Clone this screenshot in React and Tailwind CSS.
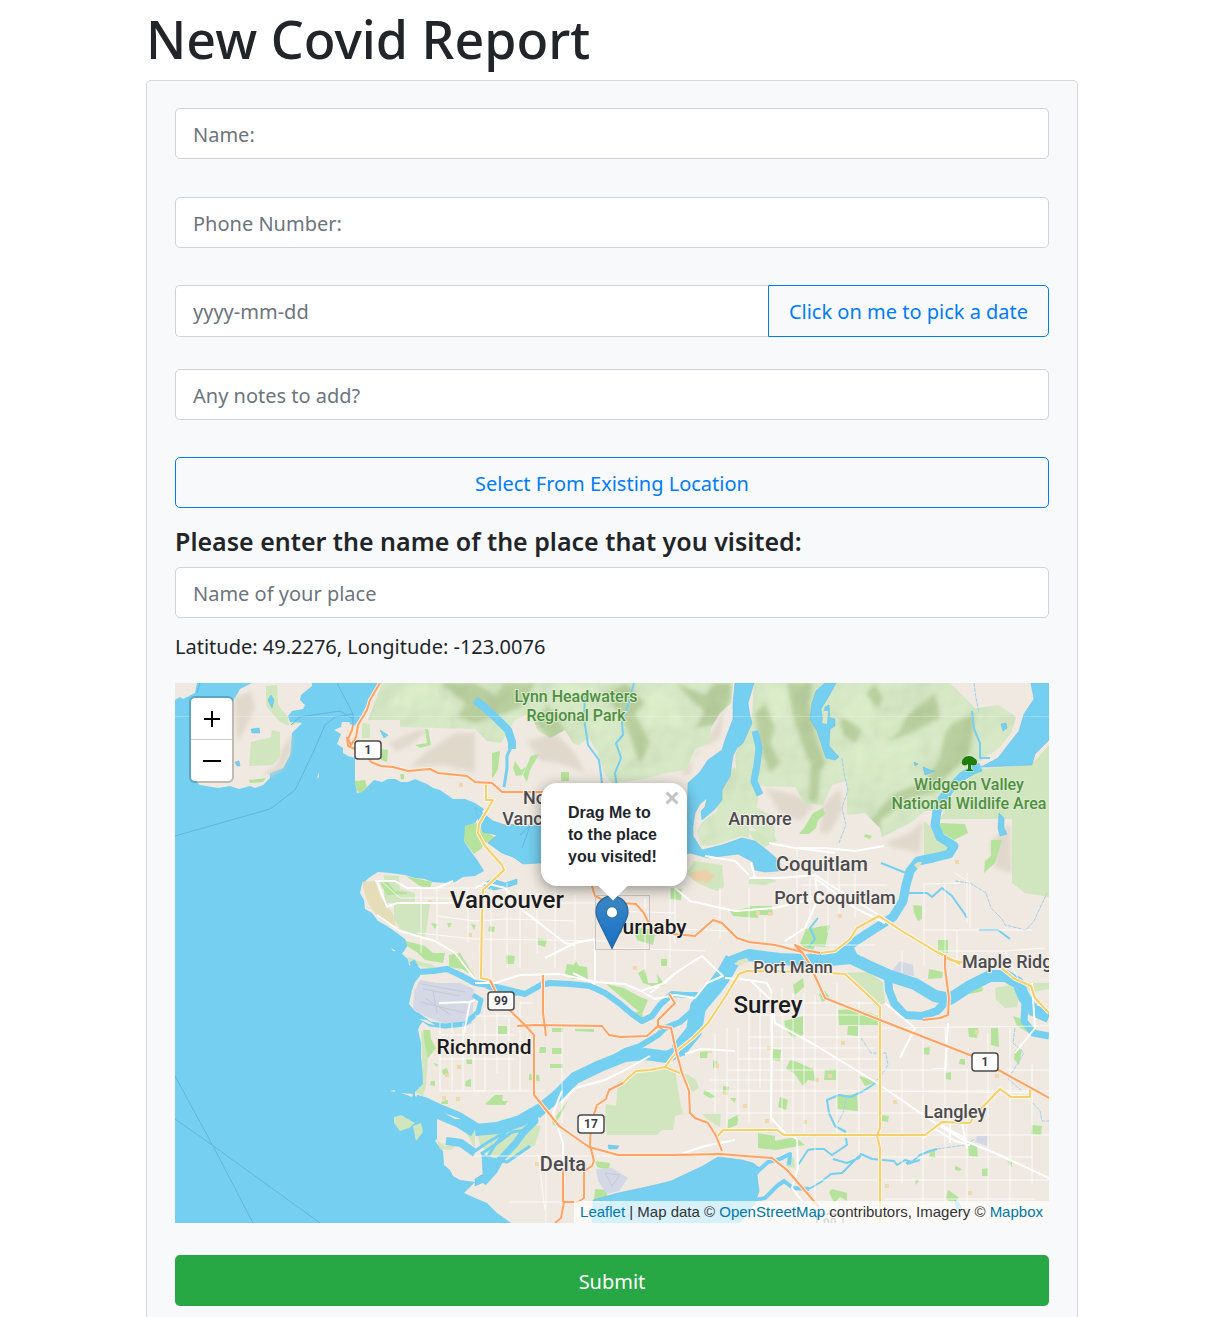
import React from "react";

const field =
  "block w-full h-[51px] rounded-[5px] border border-[#ced4da] bg-white px-[17px] pt-0.5 text-xl text-[#495057] placeholder:text-[#6c757d] placeholder:opacity-100 outline-none focus:border-[#80bdff]";

const outlineButton =
  "border border-[#007bff] text-[#007bff] text-xl hover:bg-[#007bff] hover:text-white";

/* Terrain shapes, drawn on an 874 x 540 canvas */
const MAINLAND =
  "M207 0L193 20L184 37L178 45L174 39L167 39L166 44L159 47L166 51L162 61L168 65L168 70L173 73L180 75L180 97L182 110L188 108L193 103L199 97L207 99L213 96L220 96L226 99L233 99L240 96L247 99L252 101L258 105L265 107L278 116L290 116L300 120L309 126L304 134L300 140L292 143L289 158L297 170L303 178L309 188L300 193L288 194L280 199L272 200L257 199L250 196L240 195L230 192L215 190L203 189L195 194L187 201L185 210L189 217L190 226L197 230L203 238L212 243L222 250L230 256L233 262L227 271L233 276L234 282L245 285L245 293L240 299L237 307L234 321L239 327L250 336L245 342L243 347L246 360L246 374L248 390L248 405L240 409L240 413L252 419L262 424L262 456L260 458L268 468L269 482L275 487L278 493L285 497L300 499L289 510L300 515L312 520L322 530L336 540L874 540L874 0Z";

const WATER_BODIES = [
  "M300 124L309 131L318 138L330 142L345 141L370 143L400 143L440 140L475 138L513 132L518 133L518 153L527 167L547 162L567 155L580 158L588 164L600 174L606 181L604 188L590 189L580 187L578 179L563 171L533 175L515 170L490 176L440 184L400 183L365 180L348 181L338 174L327 170L313 160L322 152L308 149L303 135Z",
  "M560 0L558 20L558 36L550 57L547 67L533 77L525 89L513 100L512 134L518 142L520 130L525 121L532 115L530 124L526 128L527 137L540 126L547 117L547 107L555 93L558 73L562 65L568 60L577 40L575 33L573 20L579 0Z",
  "M650 0L641 8L637 20L635 36L642 48L646 60L651 75L660 77L664 74L654 63L655 46L660 43L660 36L655 35L654 22L650 24L648 39L646 26L654 13L661 0Z",
  "M856 0L859 16L849 31L844 48L833 62L823 75L806 84L812 84L857 82L860 71L874 57L874 0Z",
  "M417 540L418 517L443 510L462 506L480 502L496 498L513 490L528 483L543 474L567 477L578 480L586 486L582 492L584 508L580 520L565 540Z",
  "M307 470L320 478L318 490L309 499L300 503L300 496L308 491Z",
  "M309 200L318 196L330 200L342 196L342 201L330 205L318 207L309 204Z",
  "M824 130L829 135L829 145L832 151L825 153L823 145Z",
  "M93 17L96 12L99 17L97 25ZM76 46L84 45L85 50L77 50ZM205 47L213 52L209 55ZM60 79L64 78L65 83L62 83ZM748 84L755 87L760 88L750 92ZM739 79L743 81L740 83ZM826 41L831 40L832 45L828 48Z",
  "M433 462L444 463L442 466L434 466ZM780 517L784 520L788 529L781 525Z",
];

const RIVERS = [
  ["M300 17L309 24L320 34L333 47L337 59L337 66", 8],
  ["M337 62L332 73L332 85L329 104", 3],
  ["M410 12L409 35L413 62L424 77L427 100L437 106", 2],
  ["M459 0L453 22L447 40L448 52L441 60L446 75L440 90L442 104", 2],
  ["M580 48L584 65L582 82L579 98L585 112", 7],
  ["M806 84L798 87L788 93L777 104L768 115L762 128L760 142L765 154L779 163L774 171L758 175L743 178L735 188L731 202L728 218L718 234L704 243L690 252L675 262L658 273", 9],
  ["M874 334L858 327L849 314L843 300L831 293L815 293L795 303L775 316L760 313L740 301L715 293L695 284L676 275L655 277L630 277L605 276L574 272L558 278L550 293L538 308L523 328L518 350L504 368L492 374L470 371L450 373L425 383L400 395L382 413L366 426L345 438L322 445L300 447", 12],
  ["M558 276L550 290L540 304L523 324L519 348L503 368", 16],
  ["M300 447L284 437L265 429L250 422L240 419", 15],
  ["M713 292L714 307L719 320L730 332L747 333L762 328L772 317", 8],
  ["M847 305L850 320L849 338L858 350L874 353", 7],
  ["M672 262L679 276M655 275L670 265L679 278", 10],
  ["M530 312L510 312L497 311L485 322L477 333L467 338L457 331L444 320L430 310L415 303L395 301L375 300L366 302L350 311L330 306L313 302L300 300L285 292L272 286L258 288L243 289L237 278", 6],
  ["M533 318L520 326L505 339L490 345L483 352L465 363L450 368L440 374", 6],
  ["M298 312L306 317L303 329L290 341L270 343L255 341L241 331", 5],
  ["M311 304L335 312L350 310", 3],
  ["M357 425L360 438L348 450L340 461L325 477L319 488L308 500", 7],
  ["M357 435L330 449L310 461L300 468M352 447L337 449L321 461L306 471M333 446L320 462L312 475L332 479L355 463M384 412L374 425L364 434", 3],
  ["M300 470L286 460L271 458", 8],
  ["M574 500L582 489L593 479L605 476L615 471L614 482M574 518L590 515L602 503L609 498L618 505L634 506", 4],
  ["M623 482L633 467L639 466L649 466L657 472L672 462L671 455M658 476L672 480L684 475L686 471L697 476L719 478L722 482L730 477L737 479L745 472L755 468L762 466M634 506L646 499L656 491L667 490L675 482L684 473", 2],
  ["M671 449L660 443L654 430L652 417L664 412L676 414L690 407L702 399", 2],
  ["M706 180L716 184L731 190M731 480L734 480M732 481L745 477M731 210L752 210L757 214L767 205L777 213L789 230L792 235M804 247L823 247L835 256", 2],
  ["M797 28L799 46L805 60L805 75L815 75", 2],
  ["M643 235L635 245L640 256L634 264", 2],
];

const FINE_STREAMS =
  "M667 75L669 90L673 107L667 125L671 142L664 160M799 0L801 15L804 30M780 198L795 200L811 210L816 225L827 236L830 242L851 247L859 238L872 210M686 355L696 370L711 370L713 382L706 393L700 399M840 345L838 360L849 370L840 385L833 396L846 407M858 420L865 428L867 438L874 438M672 413L668 430L660 445M762 466L790 462L800 456";

const PARKS = [
  "M207 0L193 37L225 37L225 44L300 46L312 58L326 60L340 37L355 30L363 48L375 55L390 47L398 60L404 62L413 55L422 68L430 92L437 100L470 96L490 90L511 87L520 66L535 60L536 45L545 30L556 20L558 0Z",
  "M579 0L577 33L567 55L560 73L562 95L574 112L574 142L597 160L600 148L598 133L582 125L584 103L620 104L630 121L648 122L657 102L672 98L672 132L690 130L705 145L707 154L735 140L750 128L762 128L775 104L790 90L806 77L824 65L836 50L841 34L824 22L800 25L775 0Z",
  "M545 93L560 84L574 112L574 155L566 153L540 162L526 163L522 148L528 138L542 128Z",
  "M804 86L856 82L874 62L874 214L850 210L837 200L837 136L765 136L780 108Z",
  "M749 138L768 154L778 163L772 171L749 174Z",
  "M209 192L224 193L225 206L240 210L240 221L255 221L253 235L250 255L225 246L219 236L219 220L209 220Z",
  "M441 423L443 399L455 393L465 387L500 386L502 400L506 423L508 431L500 433L498 447L487 447L482 452L432 452L430 434L431 421Z",
  "M508 389L521 397L524 405L517 409ZM527 431L546 431L545 444L533 437Z",
  "M671 290L695 289L708 300L710 320L700 323Z",
  "M519 178L547 182L549 204L542 208L524 201L511 191Z",
  "M302 450L325 449L345 441L366 443L360 462L340 474L319 477L305 462Z",
  "M219 434L226 432L240 440L234 445L225 448L219 440ZM238 443L246 440L248 449L241 458ZM262 457L270 463L280 463L277 467L265 466ZM290 448L300 448L300 465Z",
  "M233 274L243 278L258 282L262 287L246 283L235 282ZM246 348L250 352L253 373L251 402L248 413L240 409L248 401Z",
  "M820 305L835 302L845 312L842 324L830 325L821 317Z",
  "M91 3L102 2L103 22L113 34L114 43L105 39L91 23ZM76 59L96 54L97 47L105 49L105 75L97 82L74 83ZM187 40L195 41L195 55L187 55ZM115 39L127 40L116 42Z",
  "M611 479L619 474L620 485L612 484ZM845 300L874 300L874 306L858 309Z",
  "M574 148L598 148L602 158L590 164L578 156ZM574 195L590 194L602 198L590 202L574 201Z",
];

const MEADOWS = [
  "M180 98L190 97L192 105L185 110L181 107ZM206 66L213 67L212 79L206 77ZM74 97L91 95L88 99L75 100ZM225 91L229 91L229 96L226 97Z",
  "M250 46L253 46L256 62L245 65L240 62L252 60Z",
  "M290 143L301 140L311 149L323 156L315 160L308 159L307 165L299 171L289 158Z",
  "M205 197L213 199L220 208L232 209L232 211L212 212L206 202ZM231 193L257 199L255 205L245 203ZM231 258L250 263L258 270L270 270L268 280L250 277L243 270L232 263Z",
  "M274 272L285 270L300 294L287 286L274 284ZM248 347L255 347L256 356L261 365L253 375L250 363Z",
  "M392 281L399 282L400 277L404 283L412 284L413 296L398 296L390 291ZM431 301L449 305L463 313L473 317L467 331L451 318ZM455 330L466 328L468 334L462 335Z",
  "M377 439L388 424L393 418L385 433L379 443ZM310 421L320 412L328 412L327 418L333 418L330 422L313 422Z",
  "M340 78L346 87L351 84L347 92L341 93L338 85ZM356 73L364 71L355 87L352 99L348 92ZM317 70L325 68L323 86L317 96ZM386 89L394 89L394 98L386 98Z",
  "M629 145L638 130L648 125L650 131L643 137L641 145L634 151L624 151ZM690 151L697 153L695 156L689 154ZM764 140L790 141L793 150L779 157L768 150ZM816 157L827 157L820 180L809 190L810 178L816 173ZM738 222L747 223L747 236L743 238L739 230Z",
  "M574 223L597 223L598 232L580 232ZM631 246L655 242L650 264L640 263L636 272L625 261ZM763 257L773 257L773 270L763 270ZM495 205L507 206L506 217L495 216ZM555 228L582 223L583 235L558 233Z",
  "M663 327L680 326L705 333L703 342L664 342ZM673 343L683 343L683 353L672 352ZM609 338L628 333L628 352L618 355L611 347ZM597 366L606 367L605 378L597 377ZM615 377L622 379L638 386L641 398L633 397L628 403L619 390L611 386Z",
  "M662 413L682 411L683 428L662 426ZM684 393L702 399L690 403ZM650 387L661 386L661 397L649 397ZM605 414L613 417L611 427L603 424ZM583 461L620 454L630 462L601 467L583 465ZM706 432L714 433L713 439L707 438Z",
  "M816 345L823 345L824 364L816 362ZM793 345L803 345L802 355L794 354ZM840 367L847 366L844 382L839 376ZM771 390L776 389L776 397L771 396ZM749 365L755 364L754 372L749 371ZM785 376L790 376L790 382L784 381ZM857 442L867 443L866 452L856 451Z",
  "M793 459L802 464L803 474L794 473ZM807 486L813 485L813 493L807 493ZM780 483L787 486L785 488L780 487ZM773 507L779 511L784 515L777 520L771 516ZM755 467L760 467L760 475L754 474ZM832 478L837 479L837 484Z",
  "M657 506L665 508L672 510L672 518L665 514L659 520L654 509ZM741 496L744 498L740 502ZM420 506L432 507L432 517L419 518ZM420 478L435 480L434 487L422 484Z",
  "M365 364L371 364L371 370L364 370ZM377 365L387 365L387 371L377 371ZM375 381L388 381L388 385L375 385ZM323 343L332 343L332 351L323 351ZM377 345L388 345L388 349L377 349ZM354 391L364 392L365 398L354 397ZM400 346L419 346L419 349L400 348Z",
  "M258 380L263 381L262 384ZM267 387L272 385L274 391L268 392ZM256 398L260 398L260 403L255 402ZM291 376L297 376L297 381L292 381ZM291 398L296 396L296 404L290 403ZM267 418L273 417L273 421L266 421Z",
  "M463 290L470 286L473 300L483 300L482 291L490 302L480 304L468 300ZM331 272L340 273L339 281L331 281ZM486 276L492 276L492 283L486 283ZM525 369L533 368L532 375L525 375ZM538 377L543 379L538 386ZM548 403L554 404L553 411L548 411ZM555 415L561 415L560 420ZM530 407L541 414L535 415L528 411Z",
  "M553 437L564 431L562 442L552 446ZM583 450L600 453L600 460L583 462ZM256 240L263 241L260 246ZM272 240L277 240L274 245ZM296 241L301 242L299 247ZM314 243L320 244L319 249L313 248ZM362 255L372 257L370 264L363 262ZM459 248L471 243L480 252L478 262L462 257Z",
  "M618 302L628 295L629 304L620 312ZM644 311L650 308L655 315L647 319ZM754 286L768 289L767 295L753 296ZM793 303L806 299L808 308L795 311ZM838 333L850 337L862 346L854 350L842 343Z",
];

const RELIEF_DARK = [
  "M265 0L290 20L283 35L300 40L345 25L360 0L330 0L320 12L300 0Z",
  "M430 10L450 40L465 80L475 60L460 30L470 20L450 0Z",
  "M500 0L530 30L520 45L545 40L556 15L556 0L540 0L530 12Z",
  "M612 0L637 0L635 20L640 50L650 80L643 90L632 75L620 40Z",
  "M706 55L735 30L760 10L765 35L740 48L715 58Z",
  "M778 40L800 30L795 70L770 95L760 110L735 115L705 138L706 152L690 142L720 110L750 98L765 75L770 50Z",
  "M636 75L646 85L642 120L634 118Z",
  "M590 20L600 45L595 60L605 80L595 90L584 60L580 30Z",
  "M360 40L372 22L380 30L392 52L376 58Z",
  "M700 0L708 15L700 30L690 12ZM665 35L690 42L680 60L668 52Z",
];

const RELIEF_LIGHT = [
  "M230 0L262 5L280 28L258 22L240 30L215 20Z",
  "M380 0L420 5L435 30L425 55L400 30Z",
  "M475 0L500 20L510 50L490 40L482 70L472 40Z",
  "M590 0L610 5L612 30L600 38Z",
  "M662 28L690 10L715 40L735 22L725 48L700 70L690 50Z",
  "M680 60L720 65L745 55L735 85L700 110L680 90Z",
  "M810 90L850 95L845 120L820 120Z",
];

const HILLS = [
  "M60 15L76 8L80 25L68 50L62 60L60 30Z",
  "M96 93L108 85L116 68L117 50L108 65L102 82L88 92Z",
  "M214 60L240 48L255 46L235 62L222 68Z",
  "M250 70L280 50L300 50L300 90L270 82L235 84Z",
  "M352 58L380 50L400 70L410 90L385 80L365 78Z",
  "M590 105L620 112L640 122L625 138L605 130Z",
  "M648 122L665 105L668 125L655 150L645 150Z",
  "M690 150L710 160L735 150L748 138L745 170L720 165Z",
  "M815 160L835 140L837 190L820 185Z",
  "M520 70L545 55L550 20L542 40L530 62L505 92L515 92Z",
];

const STREETS_MINOR =
  "M246 205L246 270M262 205L262 257M293 205L293 260M316 205L316 300M332 200L332 285M345 206L345 285M362 210L362 270M380 205L380 285M400 212L400 280M440 215L440 300M470 215L470 290M495 205L495 285M206 198L225 215L262 215L300 216M232 205L300 205M262 233L300 238L330 236L400 238M242 250L300 256L440 258M300 220L420 220M440 228L500 230M470 245L560 248M500 205L500 260M545 205L545 255M440 265L530 268M265 340L265 408L310 408M277 340L277 408M288 340L288 408M299 340L299 408M265 352L340 352M265 376L340 376M310 325L310 408M322 330L322 390M334 335L334 408M345 318L345 408M300 333L345 333M300 366L345 366M345 320L358 320M387 340L387 440M300 408L370 408M265 363L300 363M371 430L371 540M363 470L370 527M335 519L430 519M300 473L500 473";

const STREETS_EAST =
  "M585 305L585 405M596 305L596 440M607 305L607 445M618 310L618 450M629 310L629 450M640 312L640 530M662 300L662 455M684 318L684 470M552 345L552 445M563 345L563 435M574 320L574 440M540 350L540 430M596 320L705 320M585 332L705 332M574 354L705 354M574 365L700 365M563 376L705 376M552 387L874 387M535 397L620 397M530 408L874 408M552 430L705 430M727 387L727 500M748 345L748 540M770 387L770 520M792 385L792 540M813 350L813 540M835 345L835 535M857 380L857 500M704 345L874 343M704 408L870 410M704 430L790 430M704 452L874 452M704 474L857 474M640 497L874 497M710 516L860 516M749 200L749 283M770 200L770 280M792 190L792 240M749 247L857 247M782 247L782 285M749 201L785 200M574 205L574 250M590 235L590 262M622 165L622 265M635 195L635 240M653 165L653 250M664 180L664 230M680 190L680 235M604 262L700 262M626 202L712 202M600 212L660 215M760 268L830 268L870 265M727 268L727 290M770 345L772 385L757 386M830 268L845 300M795 245L795 200L780 190";

const STREETS_MAJOR =
  "M420 256L420 298M300 300L320 300L345 292L385 291L420 299L450 301L466 308L480 316L500 312L520 315L532 300L548 293L527 273L505 287L475 310M466 308L490 300L500 290M500 205L515 218L560 228L600 225L640 215M398 290L420 301M370 275L400 260L420 256M387 408L378 430L388 460L388 520M386 420L400 405L430 397L450 387L475 373M510 371L525 366L560 368M550 295L575 297L597 318L600 340L640 362L702 400L760 440L790 458L820 470L874 495M640 195L680 225L710 240M574 195L605 195L640 192L660 205L707 234M594 160L620 165L650 165L680 168L709 163M622 165L660 170M530 173L560 178L574 192M640 194L643 216L630 245L610 258M576 180L580 195M710 320L740 345L725 375M597 318L597 360L596 435L610 450L622 456L623 485L617 505L640 535M773 340L770 388M857 300L860 345L840 370M500 473L530 463L560 457M560 295L592 300L597 310M264 320L295 319L300 317M295 319L289 350M300 205L310 200L330 205L345 225L390 260L400 262M278 198L262 205L232 205L220 198L200 198M202 198L212 224L222 220L300 220M202 232L225 248L260 258L280 270L300 296M748 455L760 446L780 458L795 462M762 440L790 455M775 436L775 460M787 440L792 465";

const HIGHWAYS_YELLOW = [
  "M311 101L311 117L318 117L304 141L303 150L310 163L327 182L329 187L308 207L307 230L306 295L315 297",
  "M705 540L705 465L702 452L705 445L705 324L696 315L670 291L640 289L572 288L564 291L552 311L533 340L518 355L503 367L490 384L475 387L461 388L453 395L448 400",
  "M646 270L660 268L675 256L682 245L704 233L727 248L760 268L785 281",
  "M541 455L548 447L602 447L609 452L750 452L767 439L795 440L800 432L825 406L836 414L855 414L855 402",
  "M490 384L505 390L509 389M765 270L775 277L790 280M825 284L840 296L856 303L860 315L874 330",
];

const HIGHWAYS_ORANGE = [
  "M205 0L195 17L192 27L183 42L181 54L176 62L173 56L177 47L178 42M172 54L173 63L180 66L191 70L196 79L206 83L218 84L233 88L255 86L263 90L292 93L300 99L317 100L327 109L370 109L400 115L413 190L420 213L432 219L461 221L468 229L475 242L487 250L520 253L538 237L547 240L562 255L574 259L600 262L627 269L634 280L650 315L705 337L800 374L820 385L874 415",
  "M315 297L325 318L350 342L359 352L359 412L384 443L414 464L443 472L500 472L545 471L597 475L612 487L644 524",
  "M368 292L368 330L371 353M342 343L360 342L427 343L434 352L445 354L472 353L483 343L496 345L501 368L507 390L514 408L515 430L520 435L533 440L541 453L547 468",
  "M494 311L500 320L483 337L483 343L487 346M448 400L434 407L431 416L422 422L416 440L415 462L419 478L417 483L409 488L409 515L403 519L389 519L386 535L380 540M388 485L388 519",
  "M627 270L620 262L630 267L645 270M770 272L770 285L774 315L773 332L765 335L748 337",
];

const FERRIES =
  "M162 0L178 31L178 43M116 42L125 34L165 28L178 36M178 31L160 34L150 42L138 70L120 107L95 126L0 153M0 393L38 463L78 540M0 436L37 462L145 540M25 0L22 10M345 152L355 143L347 165";

const SAND =
  "M187 199L200 198L206 215L218 231L221 245L205 236L195 224L190 212Z";

const TAN_LOTS = [
  [284, 100], [253, 217], [293, 250], [270, 390], [282, 382], [267, 413], [281, 414], [540, 381], [549, 408],
  [568, 421], [533, 366], [592, 363], [653, 391], [666, 358], [640, 395], [581, 228], [593, 229], [663, 231],
  [820, 391], [628, 437], [590, 436], [458, 283], [360, 479], [780, 177], [800, 347], [718, 417], [710, 501], [793, 508],
];

const LABELS = [
  { x: 401, y: 19, size: 16, lines: ["Lynn Headwaters", "Regional Park"], tone: "park" },
  { x: 794, y: 107, size: 16, lines: ["Widgeon Valley", "National Wildlife Area"], tone: "park" },
  { x: 371, y: 121, size: 18, lines: ["North"], tone: "town" },
  { x: 370, y: 142, size: 18, lines: ["Vancouver"], tone: "town" },
  { x: 585, y: 142, size: 18, lines: ["Anmore"], tone: "town" },
  { x: 647, y: 188, size: 20, lines: ["Coquitlam"], tone: "town" },
  { x: 660, y: 221, size: 18, lines: ["Port Coquitlam"], tone: "town" },
  { x: 618, y: 290, size: 17, lines: ["Port Mann"], tone: "town" },
  { x: 837, y: 285, size: 18, lines: ["Maple Ridge"], tone: "town" },
  { x: 780, y: 435, size: 18, lines: ["Langley"], tone: "town" },
  { x: 388, y: 488, size: 20, lines: ["Delta"], tone: "town" },
  { x: 332, y: 225, size: 24, lines: ["Vancouver"], tone: "city" },
  { x: 473, y: 251, size: 21, lines: ["Burnaby"], tone: "city" },
  { x: 593, y: 330, size: 24, lines: ["Surrey"], tone: "city" },
  { x: 309, y: 371, size: 21, lines: ["Richmond"], tone: "city" },
];

const LABEL_TONES = {
  park: "fill-[#4f8f42] stroke-[#dcebcd]",
  town: "fill-[#4c4b4f] stroke-[#f6f2ec]",
  city: "fill-[#1c1c1e] stroke-[#f6f2ec]",
};

const SHIELDS = [
  { x: 193, y: 67, text: "1" },
  { x: 326, y: 318, text: "99" },
  { x: 416, y: 441, text: "17" },
  { x: 810, y: 379, text: "1" },
  { x: 655, y: 540, text: "99", faded: true },
];

function MapCanvas() {
  return (
    <svg
      viewBox="0 0 874 540"
      preserveAspectRatio="xMidYMid slice"
      className="block h-full w-full"
      role="img"
      aria-label="Map of Vancouver and surrounding cities"
    >
      <defs>
        <filter id="relief" x="-10%" y="-10%" width="120%" height="120%">
          <feGaussianBlur stdDeviation="2" />
        </filter>
        <filter id="ridges" x="0" y="0" width="100%" height="100%">
          <feTurbulence type="fractalNoise" baseFrequency="0.02" numOctaves="3" seed="8" />
          <feDiffuseLighting surfaceScale="10" lightingColor="#ffffff" result="light">
            <feDistantLight azimuth="225" elevation="55" />
          </feDiffuseLighting>
        </filter>
        <clipPath id="hills">
          <path d={PARKS[0]} />
          <path d={PARKS[1]} />
          <path d={PARKS[2]} />
        </clipPath>
      </defs>

      <rect width="874" height="540" fill="#75cff0" />
      <path d="M0 0L22 0L20 10L14 13L8 16L5 14L0 17Z" fill="#efe9e1" />
      <path
        d="M77 0L65 6L60 15L35 50L20 80L18 95L25 102L43 105L55 103L64 106L75 103L80 105L88 102L95 95L95 90L108 85L115 72L117 50L127 40L115 39L113 33L117 28L128 26L130 22L125 17L126 12L137 3L137 0Z"
        fill="#efe9e1"
      />
      <path d={MAINLAND} fill="#efe9e1" />
      <path d="M142 95L144 89L144 94L141 96ZM215 408L220 407L220 409ZM226 410L238 411L237 414ZM216 265L221 268L218 268Z" fill="#efe9e1" />

      <g fill="#ddd3c6" opacity="0.75" filter="url(#relief)">
        {HILLS.map((d) => <path key={d} d={d} />)}
      </g>
      <g fill="#d1e6be">
        {PARKS.map((d) => <path key={d} d={d} />)}
      </g>
      <g clipPath="url(#hills)">
        <g fill="#b4cb98" opacity="0.85" filter="url(#relief)">
          {RELIEF_DARK.map((d) => <path key={d} d={d} />)}
        </g>
        <g fill="#dcefca" opacity="0.8" filter="url(#relief)">
          {RELIEF_LIGHT.map((d) => <path key={d} d={d} />)}
        </g>
        <rect width="874" height="215" filter="url(#ridges)" opacity="0.14" className="mix-blend-multiply" />
      </g>
      <g fill="#b5e39b">
        {MEADOWS.map((d) => <path key={d} d={d} />)}
      </g>
      <path d={SAND} fill="#e5dcb8" />
      <path d="M515 190L530 186L540 193L533 200L518 197Z" fill="#ecd2aa" />
      <g fill="#f0d8ae">
        {TAN_LOTS.map(([x, y]) => <rect key={`${x}-${y}`} x={x} y={y} width="4" height="4" />)}
      </g>
      <path
        d="M245 297L262 300L285 300L299 306L297 341L268 340L250 333L238 326L239 308ZM421 486L437 485L453 495L444 508L432 511L423 498ZM725 278L738 282L739 293L716 289ZM802 453L813 453L812 463L800 459Z"
        fill="#d3d8e4"
      />
      <path d="M246 301L290 309M248 306L285 313M250 315L276 332M258 308L262 330M245 319L290 330M430 490L445 492L437 503Z" fill="none" stroke="#c4c9dc" strokeWidth="1" />

      <g fill="#75cff0" stroke="#63bde0" strokeWidth="0.5">
        {WATER_BODIES.map((d) => <path key={d} d={d} />)}
      </g>
      <g fill="none" stroke="#75cff0" strokeLinejoin="round">
        {RIVERS.map(([d, w]) => <path key={d} d={d} strokeWidth={w} />)}
      </g>
      <path d={FINE_STREAMS} fill="none" stroke="#a4cfe8" strokeWidth="1" strokeDasharray="4 1" />
      <path d="M559 281L564 277L572 275L574 278L565 283ZM739 182L743 179L747 179L743 186ZM649 28L653 28L652 41L647 40Z" fill="#e1e4c4" />
      <path d="M262 444L268 447L278 449L280 454L272 453L262 452ZM244 336L252 337L260 342L254 341ZM269 430L286 436L280 436Z" fill="#efe9e1" />
      <path d={FERRIES} fill="none" stroke="#62b4e4" strokeWidth="1" />
      <path d="M0 33.5H874" stroke="#ffffff" strokeWidth="1" opacity="0.25" />

      <g fill="none" stroke="#ffffff">
        <path d={STREETS_MINOR} strokeWidth="1" opacity="0.75" />
        <path d={STREETS_EAST} strokeWidth="1" opacity="0.75" />
        <path d={STREETS_MAJOR} strokeWidth="2" strokeLinejoin="round" />
      </g>
      <g fill="none" strokeLinejoin="round">
        {HIGHWAYS_YELLOW.map((d) => <path key={`c${d}`} d={d} stroke="#fbf6e6" strokeWidth="4" />)}
        {HIGHWAYS_YELLOW.map((d) => <path key={d} d={d} stroke="#f5cf69" strokeWidth="2" />)}
        {HIGHWAYS_ORANGE.map((d) => <path key={`c${d}`} d={d} stroke="#fdeee0" strokeWidth="4" />)}
        {HIGHWAYS_ORANGE.map((d) => <path key={d} d={d} stroke="#ffa265" strokeWidth="2" />)}
      </g>
      <rect x="420.500" y="212.500" width="54" height="54" fill="none" stroke="#c9c5c2" strokeWidth="1" />

      <g fill="#1f7d0c" stroke="#ffffff" strokeWidth="0.6" paintOrder="stroke">
        <path d="M789 75Q786 77 787 81Q790 84 793 81V86L790 88H799L796 86V82Q802 84 802 79Q802 76 799 75Q798 73 794 73Q790 73 789 75Z" />
      </g>

      {LABELS.map(({ x, y, size, lines, tone }) => (
        <text
          key={`${x}-${y}`}
          textAnchor="middle"
          fontSize={size}
          strokeWidth="2"
          paintOrder="stroke"
          className={`font-['Roboto',sans-serif] font-medium ${LABEL_TONES[tone]}`}
        >
          {lines.map((line, i) => (
            <tspan key={line} x={x} y={y + i * 19}>{line}</tspan>
          ))}
        </text>
      ))}

      {SHIELDS.map(({ x, y, text, faded }) => (
        <g key={`${x}-${y}`} opacity={faded ? 0.6 : 1}>
          <rect x={x - 13} y={y - 9} width="26" height="18" rx="3" fill="#fdfdfd" stroke="#4a4a4a" strokeWidth="1.500" />
          <text x={x} y={y + 4} textAnchor="middle" fontSize="12" className="fill-[#3c3c3c] font-['Roboto',sans-serif] font-bold">
            {text}
          </text>
        </g>
      ))}
    </svg>
  );
}

function Marker() {
  return (
    <svg viewBox="0 0 25 41" className="absolute top-[212px] left-1/2 h-[55px] w-[34px] -translate-x-1/2" aria-hidden="true">
      <defs>
        <linearGradient id="pin" x1="0" y1="0" x2="0" y2="1">
          <stop offset="0" stopColor="#3d87c2" />
          <stop offset="1" stopColor="#1670c8" />
        </linearGradient>
      </defs>
      <path
        d="M12.500 0.600C5.900 0.600 0.600 5.900 0.600 12.300C0.600 14.800 1.500 17.300 2.700 19.900L12.500 39.600L22.300 19.900C23.500 17.300 24.400 14.800 24.400 12.300C24.400 5.900 19.100 0.600 12.500 0.600Z"
        fill="url(#pin)"
        stroke="#2b6a9c"
        strokeWidth="1"
      />
      <circle cx="12.500" cy="13" r="4.200" fill="#ffffff" stroke="#2d6f9f" strokeWidth="0.800" />
    </svg>
  );
}

function Popup() {
  return (
    <div className="absolute top-[100px] left-1/2 w-[146px] -translate-x-[71px]">
      <div className="absolute inset-0 rounded-2xl bg-white shadow-[0_3px_14px_rgba(0,0,0,0.4)]" />
      <div className="absolute -bottom-[10px] left-[61px] size-[22px] rotate-45 bg-white" />
      <p className="relative px-[27px] pt-[19px] pb-[18px] font-['Liberation_Sans',sans-serif] text-base leading-[22px] font-bold whitespace-nowrap text-[#212529]">
        Drag Me to
        <br />
        to the place
        <br />
        you visited!
      </p>
      <button type="button" aria-label="Close popup" className="absolute top-2 right-2 flex size-[14px] items-center justify-center text-[#c3c3c3]">
        <svg viewBox="0 0 14 14" className="size-[14px]" stroke="currentColor" strokeWidth="3">
          <path d="M1.500 1.500L12.500 12.500M12.500 1.500L1.500 12.500" />
        </svg>
      </button>
    </div>
  );
}

function ZoomControl() {
  return (
    <div className="absolute top-[13px] left-[14px] flex w-[45px] flex-col rounded-[6px] border-2 border-black/20 bg-white bg-clip-padding text-black">
      <button type="button" aria-label="Zoom in" className="flex h-[42px] items-center justify-center border-b border-[#cccccc]">
        <svg viewBox="0 0 18 18" className="size-[18px]" stroke="currentColor" strokeWidth="2">
          <path d="M9 1V17M1 9H17" />
        </svg>
      </button>
      <button type="button" aria-label="Zoom out" className="flex h-[41px] items-center justify-center">
        <svg viewBox="0 0 18 18" className="size-[18px]" stroke="currentColor" strokeWidth="2">
          <path d="M0 9H18" />
        </svg>
      </button>
    </div>
  );
}

export default function App() {
  return (
    <main className="min-h-screen bg-white pr-0.5 font-['Noto_Sans','Open_Sans',sans-serif] text-[#212529]">
      <div className="mx-auto max-w-[932px]">
        <h1 className="pt-1.5 pb-2 text-[52px] leading-[66px] font-medium">New Covid Report</h1>
        <form className="rounded-t-[5px] border border-b-0 border-[#d6d8db] bg-[#f8f9fa] px-7 pt-[27px] pb-[11px]" onSubmit={(e) => e.preventDefault()}>
          <input aria-label="Name" type="text" placeholder="Name:" className={field} />
          <input aria-label="Phone Number" type="tel" placeholder="Phone Number:" className={`${field} mt-[38px]`} />
          <div className="mt-[37px] flex h-[52px]">
            <input
              aria-label="Date of visit"
              type="text"
              placeholder="yyyy-mm-dd"
              className="min-w-0 flex-1 rounded-l-[5px] border border-r-0 border-[#ced4da] bg-white px-[17px] pt-0.5 text-xl text-[#495057] outline-none placeholder:text-[#6c757d] placeholder:opacity-100"
            />
            <button type="button" className={`${outlineButton} w-[281px] shrink-0 rounded-r-[5px] pt-0.5 whitespace-nowrap`}>
              Click on me to pick a date
            </button>
          </div>
          <input aria-label="Notes" type="text" placeholder="Any notes to add?" className={`${field} mt-8`} />
          <button type="button" className={`${outlineButton} mt-[37px] block h-[51px] w-full rounded-[5px] pt-0.5`}>
            Select From Existing Location
          </button>
          <label htmlFor="place" className="mt-4 mb-[9px] block text-[25px] leading-[34px] font-semibold">
            Please enter the name of the place that you visited:
          </label>
          <input id="place" type="text" placeholder="Name of your place" className={field} />
          <p className="mt-3 text-xl leading-[33px]">Latitude: 49.2276, Longitude: -123.0076</p>
          <div className="relative mt-5 h-[540px] overflow-hidden">
            <MapCanvas />
            <Marker />
            <Popup />
            <ZoomControl />
            <div className="absolute right-0 bottom-0 bg-white/70 px-1.5 font-['Liberation_Sans',sans-serif] text-[15px] leading-[22px] whitespace-nowrap text-[#333333]">
              <a href="#leaflet" className="text-[#0078a8]">Leaflet</a> | Map data ©{" "}
              <a href="#osm" className="text-[#0078a8]">OpenStreetMap</a> contributors, Imagery ©{" "}
              <a href="#mapbox" className="text-[#0078a8]">Mapbox</a>
            </div>
          </div>
          <button type="submit" className="mt-8 block h-[51px] w-full rounded-[5px] bg-[#28a745] pt-0.5 text-xl text-white hover:bg-[#218838]">
            Submit
          </button>
        </form>
      </div>
    </main>
  );
}
